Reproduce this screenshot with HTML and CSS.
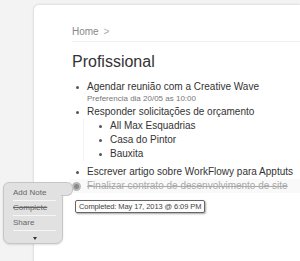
FILE: index.html
```html
<!DOCTYPE html>
<html>
<head>
<meta charset="utf-8">
<link rel="stylesheet" href="styles.css">
</head>
<body>
<div class="page">
  <div class="card">
    <div class="crumb">Home <span class="sep">&gt;</span></div>
    <h1 class="title">Profissional</h1>
    <ul class="list">
      <li class="item">Agendar reunião com a Creative Wave
        <div class="note">Preferencia dia 20/05 as 10:00</div>
      </li>
      <li class="item item-gap">Responder solicitações de orçamento
        <ul class="sub">
          <li class="subitem">All Max Esquadrias</li>
          <li class="subitem">Casa do Pintor</li>
          <li class="subitem">Bauxita</li>
        </ul>
      </li>
      <li class="item">Escrever artigo sobre WorkFlowy para Apptuts</li>
      <li class="item done">Finalizar contrato de desenvolvimento de site
        <div class="tooltip">Completed: May 17, 2013 @ 6:09 PM</div>
      </li>
    </ul>
  </div>
  <div class="menu">
    <div class="menu-item">Add Note</div>
    <div class="menu-item strike">Complete</div>
    <div class="menu-item">Share</div>
    <div class="menu-item more"><span class="tri"></span></div>
  </div>
</div>
</body>
</html>
```

FILE: styles.css
```css
html, body {
  margin: 0;
  padding: 0;
}
body {
  background: #f3f3f3;
  font-family: "Liberation Sans", Arial, sans-serif;
  color: #333;
  overflow: hidden;
}
.page {
  position: relative;
  width: 300px;
  height: 261px;
  padding: 5px 0 0 34px;
  box-sizing: border-box;
  overflow: hidden;
}
.card {
  background: #fff;
  border-top-left-radius: 5px;
  box-shadow: 0 0 3px rgba(0, 0, 0, 0.18);
  height: 262px;
  padding: 21px 0 0 38px;
  box-sizing: border-box;
}
.crumb {
  font-size: 10px;
  line-height: 12px;
  color: #888;
  padding-bottom: 3px;
  border-bottom: 1px solid #eee;
}
.sep {
  color: #aaa;
  margin-left: 2px;
}
.title {
  margin: 10px 0 0 0;
  font-size: 16px;
  line-height: 20px;
  font-weight: normal;
  color: #333;
}
.list {
  list-style: none;
  margin: 8px 0 0 0;
  padding: 0 0 0 15px;
}
.item {
  position: relative;
  font-size: 10px;
  line-height: 14px;
  color: #333;
  white-space: nowrap;
}
.item::before {
  content: "";
  position: absolute;
  left: -11px;
  top: 5.5px;
  width: 3px;
  height: 3px;
  border-radius: 50%;
  background: #555;
}
.item-gap {
  margin-top: 1px;
}
.note {
  font-size: 8px;
  line-height: 10px;
  color: #777;
}
.sub {
  list-style: none;
  margin: 0 0 4px -4px;
  padding: 0 0 0 26px;
  border-left: 1px solid #f3f3f3;
}
.subitem {
  position: relative;
  line-height: 14px;
}
.subitem::before {
  content: "";
  position: absolute;
  left: -11px;
  top: 5.5px;
  width: 3px;
  height: 3px;
  border-radius: 50%;
  background: #555;
}
.done {
  color: #aaa;
  text-decoration: line-through;
  z-index: 0;
}
.done::after {
  content: "";
  position: absolute;
  left: -18px;
  right: -200px;
  top: 0;
  bottom: 0;
  background: #f9f9f9;
  z-index: -1;
}
.done::before {
  left: -15px;
  top: 2.5px;
  width: 5px;
  height: 5px;
  background: #8a8a8a;
  border: 2px solid #b8b8b8;
}
.tooltip {
  position: absolute;
  left: -12px;
  top: 21px;
  font-size: 7.5px;
  line-height: 9px;
  padding: 1px 3px;
  color: #444;
  background: #fdfdfd;
  border: 1px solid #666;
  border-radius: 2px;
  box-shadow: 1px 1px 2px rgba(0, 0, 0, 0.35);
  text-decoration: none;
  letter-spacing: -0.1px;
}
.menu {
  position: absolute;
  left: 3px;
  top: 182px;
  width: 60px;
  height: 62px;
  box-sizing: border-box;
  padding: 3px 6px 0 9px;
  background: #e1e1e1;
  border: 1px solid #c6c6c6;
  border-radius: 6px 0 7px 7px;
  box-shadow: 0 1px 2px rgba(0, 0, 0, 0.12);
}
.menu::after {
  content: "";
  position: absolute;
  left: 57px;
  top: -1px;
  width: 11px;
  height: 12px;
  background: #e1e1e1;
  border: 1px solid #c6c6c6;
  border-left: none;
  border-radius: 0 6px 6px 0;
  z-index: 0;
}
.menu-item {
  position: relative;
  z-index: 1;
  font-size: 8px;
  line-height: 14px;
  color: #666;
  border-bottom: 1px solid #f6f6f6;
}
.menu-item.more {
  border-bottom: none;
  height: 14px;
  display: flex;
  justify-content: center;
  align-items: center;
}
.strike {
  text-decoration: line-through;
}
.tri {
  width: 0;
  height: 0;
  border-left: 2.5px solid transparent;
  border-right: 2.5px solid transparent;
  border-top: 3px solid #333;
}
```
